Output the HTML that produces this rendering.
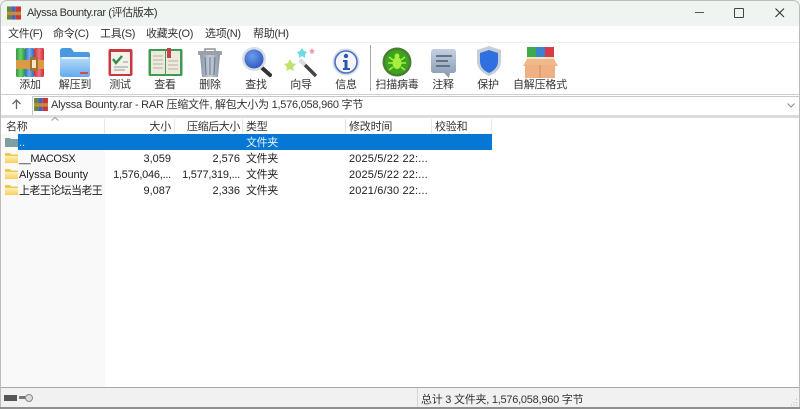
<!DOCTYPE html>
<html lang="zh"><head><meta charset="utf-8"><title>Alyssa Bounty.rar</title>
<style>
html,body{margin:0;padding:0;width:800px;height:409px;overflow:hidden;background:#f3f3f3}
body{position:relative;font-family:"Liberation Sans","Noto Sans CJK SC",sans-serif;font-size:11px;color:#222;filter:blur(.3px)}
.a{position:absolute;white-space:nowrap;line-height:16px}
.m{color:#333;letter-spacing:-.3px}
.h{color:#333;letter-spacing:-.2px}
.t{position:absolute;white-space:nowrap;line-height:14px;text-align:center;width:60px;top:78px;color:#333;letter-spacing:-.2px}
.r{text-align:right}
.n{letter-spacing:-.25px}
.d{letter-spacing:.15px}
svg{position:absolute;overflow:visible}
</style></head><body>
<svg width="0" height="0" style="left:0;top:0"><defs>
<linearGradient id="gg" x1="0" x2="1" y1="0" y2="0"><stop offset="0" stop-color="#2f9a3e"/><stop offset=".5" stop-color="#6fd06f"/><stop offset="1" stop-color="#2f9a3e"/></linearGradient>
<linearGradient id="gb" x1="0" x2="1" y1="0" y2="0"><stop offset="0" stop-color="#2f6fc0"/><stop offset=".5" stop-color="#72b0ea"/><stop offset="1" stop-color="#2f6fc0"/></linearGradient>
<linearGradient id="gr" x1="0" x2="1" y1="0" y2="0"><stop offset="0" stop-color="#c92f3a"/><stop offset=".5" stop-color="#f0747c"/><stop offset="1" stop-color="#c92f3a"/></linearGradient>
<linearGradient id="gf" x1="0" x2="0" y1="0" y2="1"><stop offset="0" stop-color="#b9dcf9"/><stop offset="1" stop-color="#62acec"/></linearGradient>
<linearGradient id="gy" x1="0" x2="0" y1="0" y2="1"><stop offset="0" stop-color="#fff0b5"/><stop offset="1" stop-color="#f6cf62"/></linearGradient>
<linearGradient id="gt" x1="0" x2="1" y1="0" y2="0"><stop offset="0" stop-color="#8895a6"/><stop offset=".5" stop-color="#c6d0dc"/><stop offset="1" stop-color="#8895a6"/></linearGradient>
<radialGradient id="gm" cx=".4" cy=".35" r=".7"><stop offset="0" stop-color="#6d9cec"/><stop offset="1" stop-color="#2d59bd"/></radialGradient>
<linearGradient id="gc" x1="0" x2="0" y1="0" y2="1"><stop offset="0" stop-color="#c3d0e0"/><stop offset="1" stop-color="#8599b3"/></linearGradient>
</defs></svg>
<div class="a" style="left:0;top:0;width:798px;height:407px;background:#fff;border:1px solid #bcbcbc;border-radius:7px 7px 0 0"></div>
<div class="a" style="left:1px;top:1px;width:798px;height:25px;background:#f0f4f1;border-radius:7px 7px 0 0"></div>
<svg style="left:7px;top:6px" width="14" height="14" viewBox="0 0 16 15"><rect x="0" y="0" width="5" height="15" fill="#5b8a3a"/><rect x="5" y="0" width="5" height="15" fill="#4b62b8"/><rect x="10" y="0" width="6" height="15" fill="#c8353c"/><rect x="0" y="6" width="16" height="4" fill="#c98a3a"/></svg>
<div class="a" style="left:27px;top:5px;color:#333;letter-spacing:-.4px">Alyssa Bounty.rar (评估版本)</div>
<div class="a" style="left:695px;top:12px;width:9px;height:1px;background:#555"></div>
<div class="a" style="left:734px;top:8px;width:8px;height:8px;border:1.3px solid #444;border-radius:1px"></div>
<svg style="left:775px;top:8px" width="10" height="10"><path d="M.5.5l8.500 8.500M9 .5L.5 9" stroke="#333" stroke-width="1.100" fill="none"/></svg>

<div class="a m" style="left:8px;top:26px">文件(F)</div>
<div class="a m" style="left:53px;top:26px">命令(C)</div>
<div class="a m" style="left:100px;top:26px">工具(S)</div>
<div class="a m" style="left:146px;top:26px">收藏夹(O)</div>
<div class="a m" style="left:205px;top:26px">选项(N)</div>
<div class="a m" style="left:253px;top:26px">帮助(H)</div>
<div class="a" style="left:1px;top:42px;width:798px;height:1px;background:#eee"></div>

<svg style="left:16px;top:47px" width="28" height="31" viewBox="0 0 28 31"><rect x="0" y="1" width="9" height="29" rx="1.500" fill="url(#gg)"/><rect x="9" y="1" width="9" height="29" rx="1" fill="url(#gb)"/><rect x="18" y="1" width="10" height="29" rx="1.500" fill="url(#gr)"/><rect x="0" y="13" width="28" height="9" fill="#dc9a45"/><rect x="14" y="10" width="8" height="14" fill="#a96f2e"/><rect x="16" y="13" width="4" height="8" fill="#f4e8c6"/></svg>
<svg style="left:59px;top:47px" width="32" height="31" viewBox="0 0 32 31"><path d="M1 4q0-3 3-3h8l3 4h14q2 0 2 3v19q0 3-3 3H4q-3 0-3-3z" fill="#4a97e2"/><path d="M1 10h30v17q0 3-3 3H4q-3 0-3-3z" fill="url(#gf)"/><path d="M3 11h26" stroke="#e3f1fc" stroke-width="2"/><rect x="21" y="25" width="8" height="2" fill="#d9484c"/></svg>
<svg style="left:108px;top:48px" width="25" height="29" viewBox="0 0 25 29"><rect x="0.500" y="1" width="24" height="27" rx="2" fill="#c9383e"/><rect x="3" y="4" width="19" height="22" fill="#f2f1ec"/><path d="M5 11l3 4 6-7" stroke="#2f8f45" stroke-width="2.400" fill="none"/><path d="M15 14h5M6 19h14M6 22h11" stroke="#aaa" stroke-width="1.300"/></svg>
<svg style="left:148px;top:48px" width="35" height="29" viewBox="0 0 35 29"><rect x="0.500" y="1" width="34" height="27" rx="1.500" fill="#3f9a55"/><rect x="3" y="3" width="14" height="23" fill="#eee9dd"/><rect x="18" y="3" width="14" height="23" fill="#eee9dd"/><rect x="19" y="0" width="4" height="10" fill="#c5404c"/><path d="M5 8h10M5 12h10M5 16h10M5 20h10M20 13h10M20 17h10M20 21h10" stroke="#b5b0a5" stroke-width="1"/></svg>
<svg style="left:197px;top:47px" width="26" height="31" viewBox="0 0 26 31"><path d="M8 2h10v3H8z" fill="none" stroke="#8d9296" stroke-width="1.500"/><rect x="1" y="4" width="24" height="4" rx="1" fill="#9aa0a6"/><path d="M3 8h20l-2 22H5z" fill="url(#gt)"/><path d="M8 10l1 18M13 10v18M18 10l-1 18" stroke="#74808c" stroke-width="1.200"/></svg>
<svg style="left:241px;top:47px" width="31" height="31" viewBox="0 0 31 31"><path d="M20 20l9 8" stroke="#333" stroke-width="4" stroke-linecap="round"/><circle cx="13" cy="12" r="12" fill="#d8dde3"/><circle cx="13" cy="12" r="9.500" fill="url(#gm)"/></svg>
<svg style="left:286px;top:47px" width="32" height="32" viewBox="0 0 32 32"><path d="M14 13l16 16" stroke="#444" stroke-width="3.400"/><path d="M14 13l5 5" stroke="#ddd" stroke-width="3.400"/><path d="M4 12l2 4 4 1-3 3 1 4-4-2-4 2 1-4-3-3 4-1z" fill="#bfe36a"/><path d="M16 1l2 3 3 1-2 3v3l-3-2-3 2V8l-2-3 3-1z" fill="#71d8e6"/><path d="M26 1l1 2 2 .5-1.500 1.500.3 2-1.800-1-1.800 1 .3-2L23 3.500l2-.5z" fill="#ef9ab0"/></svg>
<svg style="left:332px;top:47px" width="28" height="30" viewBox="0 0 28 30"><circle cx="14" cy="15" r="13.500" fill="#d6dbe6"/><circle cx="14" cy="15" r="11" fill="#f4f6fb" stroke="#4a6fc4" stroke-width="1.600"/><circle cx="14" cy="9" r="2.200" fill="#2f57b0"/><path d="M11 13h4.500v8H18v2h-7v-2h1.500v-6H11z" fill="#2f57b0"/></svg>
<div class="a" style="left:370px;top:45px;width:1px;height:46px;background:#aaa"></div>
<svg style="left:382px;top:47px" width="30" height="30" viewBox="0 0 30 30"><circle cx="15" cy="15" r="14.500" fill="#4b7d33"/><circle cx="15" cy="15" r="12" fill="#3aa51d"/><ellipse cx="15" cy="16" rx="4.500" ry="6" fill="#a7ee3d"/><circle cx="15" cy="9" r="2.500" fill="#a7ee3d"/><path d="M7 10l4 3M23 10l-4 3M6 16h5M24 16h-5M7 23l4-3M23 23l-4-3" stroke="#a7ee3d" stroke-width="1.600"/></svg>
<svg style="left:430px;top:48px" width="27" height="30" viewBox="0 0 27 30"><path d="M4 1h19q3 0 3 3v18q0 3-3 3h-3l-1 5-5-5H4q-3 0-3-3V4q0-3 3-3z" fill="url(#gc)"/><path d="M6 8h16M6 13h12M6 18h14" stroke="#5b6879" stroke-width="1.800"/></svg>
<svg style="left:476px;top:45px" width="26" height="32" viewBox="0 0 26 32"><path d="M13 1l12 4v11q0 10-12 15Q1 26 1 16V5z" fill="#c4cdd8"/><path d="M13 5l9 3v8q0 8-9 12-9-4-9-12V8z" fill="#2f6fe0"/></svg>
<svg style="left:522px;top:47px" width="36" height="31" viewBox="0 0 36 31"><rect x="5" y="0" width="9" height="12" fill="#3cab4a"/><rect x="14" y="0" width="9" height="12" fill="#3b82cf"/><rect x="23" y="0" width="9" height="12" fill="#d83b46"/><path d="M5 10h27v3H5z" fill="#f1e6c0"/><path d="M5 12h27l4 7H1z" fill="#f0b98c"/><rect x="3" y="18" width="30" height="13" fill="#efb083"/><path d="M18 18v13" stroke="#cf8a5c"/></svg>

<div class="t" style="left:0px">添加</div>
<div class="t" style="left:45px">解压到</div>
<div class="t" style="left:90px">测试</div>
<div class="t" style="left:135px">查看</div>
<div class="t" style="left:180px">删除</div>
<div class="t" style="left:226px">查找</div>
<div class="t" style="left:271px">向导</div>
<div class="t" style="left:316px">信息</div>
<div class="t" style="left:367px">扫描病毒</div>
<div class="t" style="left:413px">注释</div>
<div class="t" style="left:458px">保护</div>
<div class="t" style="left:510px">自解压格式</div>
<div class="a" style="left:1px;top:94px;width:798px;height:1px;background:#cfcfcf"></div>

<svg style="left:11px;top:99px" width="11" height="11"><path d="M5.500 10V1M1.500 5l4-4 4 4" stroke="#666" stroke-width="1.300" fill="none"/></svg>
<div class="a" style="left:32px;top:96px;width:766px;height:18px;background:#fff;border:1px solid #c8c8c8;border-right:0"></div>
<svg style="left:34px;top:98px" width="14" height="13" viewBox="0 0 16 15"><rect x="0" y="0" width="5" height="15" fill="#5b8a3a"/><rect x="5" y="0" width="5" height="15" fill="#4b62b8"/><rect x="10" y="0" width="6" height="15" fill="#c8353c"/><rect x="0" y="6" width="16" height="4" fill="#c98a3a"/></svg>
<div class="a" style="left:51px;top:97px;color:#333;letter-spacing:-.25px">Alyssa Bounty.rar - RAR 压缩文件, 解包大小为 1,576,058,960 字节</div>
<svg style="left:787px;top:103px" width="8" height="5"><path d="M.5.500l3.500 3.500 3.500-3.500" stroke="#888" fill="none"/></svg>
<div class="a" style="left:1px;top:115px;width:798px;height:3px;background:#dcdcdc"></div>

<div class="a" style="left:1px;top:118px;width:798px;height:16px;background:#fff"></div>
<div class="a h" style="left:6px;top:119px">名称</div>
<svg style="left:51px;top:117px" width="8" height="4"><path d="M.5 3.500L4 .5l3.500 3" stroke="#999" fill="none"/></svg>
<div class="a r h" style="left:105px;top:119px;width:66px">大小</div>
<div class="a r h" style="left:175px;top:119px;width:65px;letter-spacing:-.4px">压缩后大小</div>
<div class="a h" style="left:246px;top:119px">类型</div>
<div class="a h" style="left:349px;top:119px">修改时间</div>
<div class="a h" style="left:435px;top:119px">校验和</div>
<div class="a" style="left:104px;top:119px;width:1px;height:15px;background:#e8e8e8"></div>
<div class="a" style="left:174px;top:119px;width:1px;height:15px;background:#e8e8e8"></div>
<div class="a" style="left:242px;top:119px;width:1px;height:15px;background:#e8e8e8"></div>
<div class="a" style="left:345px;top:119px;width:1px;height:15px;background:#e8e8e8"></div>
<div class="a" style="left:431px;top:119px;width:1px;height:15px;background:#e8e8e8"></div>
<div class="a" style="left:491px;top:119px;width:1px;height:15px;background:#e8e8e8"></div>

<div class="a" style="left:1px;top:134px;width:104px;height:253px;background:#f9f9f9"></div>
<div class="a" style="left:105px;top:134px;width:694px;height:253px;background:#fff"></div>

<div class="a" style="left:18px;top:134px;width:474px;height:16px;background:#0678d4"></div>
<div class="a" style="left:19px;top:135px;color:#fff">..</div>
<div class="a h" style="left:246px;top:135px;color:#e8f3fc;letter-spacing:-.4px">文件夹</div>
<svg style="left:5px;top:137px" width="13" height="10"><path d="M0 1h5l1 1h7v8H0z" fill="#7d9fa0"/></svg>

<svg style="left:5px;top:153px" width="13" height="10"><path d="M0 0h5l1 1.500h7V10H0z" fill="#f2c74f"/><rect y="3" width="13" height="7" fill="url(#gy)"/></svg>
<div class="a" style="left:19px;top:151px;letter-spacing:-.45px">__MACOSX</div>
<div class="a r" style="left:105px;top:151px;width:66px">3,059</div>
<div class="a r" style="left:175px;top:151px;width:65px">2,576</div>
<div class="a" style="left:246px;top:151px;letter-spacing:-.4px">文件夹</div>
<div class="a d" style="left:349px;top:151px">2025/5/22 22:...</div>

<svg style="left:5px;top:169px" width="13" height="10"><path d="M0 0h5l1 1.500h7V10H0z" fill="#f2c74f"/><rect y="3" width="13" height="7" fill="url(#gy)"/></svg>
<div class="a" style="left:19px;top:167px;letter-spacing:-.05px">Alyssa Bounty</div>
<div class="a r n" style="left:105px;top:167px;width:66px">1,576,046,...</div>
<div class="a r n" style="left:175px;top:167px;width:65px">1,577,319,...</div>
<div class="a" style="left:246px;top:167px;letter-spacing:-.4px">文件夹</div>
<div class="a d" style="left:349px;top:167px">2025/5/22 22:...</div>

<svg style="left:5px;top:185px" width="13" height="10"><path d="M0 0h5l1 1.500h7V10H0z" fill="#f2c74f"/><rect y="3" width="13" height="7" fill="url(#gy)"/></svg>
<div class="a" style="left:19px;top:183px;letter-spacing:-.6px">上老王论坛当老王</div>
<div class="a r" style="left:105px;top:183px;width:66px">9,087</div>
<div class="a r" style="left:175px;top:183px;width:65px">2,336</div>
<div class="a" style="left:246px;top:183px;letter-spacing:-.4px">文件夹</div>
<div class="a d" style="left:349px;top:183px">2021/6/30 22:...</div>

<div class="a" style="left:1px;top:387px;width:798px;height:1px;background:#a8a8a8"></div>
<div class="a" style="left:1px;top:388px;width:798px;height:19px;background:#f1f1f1"></div>
<div class="a" style="left:417px;top:388px;width:1px;height:19px;background:#d5d5d5"></div>
<div class="a" style="left:4px;top:395px;width:13px;height:6px;background:#555"></div>
<svg style="left:19px;top:393px" width="14" height="10"><rect x="0" y="3" width="8" height="3" fill="#777"/><circle cx="10" cy="5" r="3.500" fill="#ddd" stroke="#888"/></svg>
<div class="a" style="left:421px;top:392px;color:#333;letter-spacing:-.25px">总计 3 文件夹, 1,576,058,960 字节</div>
<svg style="left:790px;top:398px" width="8" height="8"><path d="M6.500 1v1M4 4v1M6.500 4v1M1.500 6.500v1M4 6.500v1M6.500 6.500v1" stroke="#bbb"/></svg>
<div class="a" style="left:0;top:407px;width:800px;height:2px;background:#8f8f8f"></div>
</body></html>
